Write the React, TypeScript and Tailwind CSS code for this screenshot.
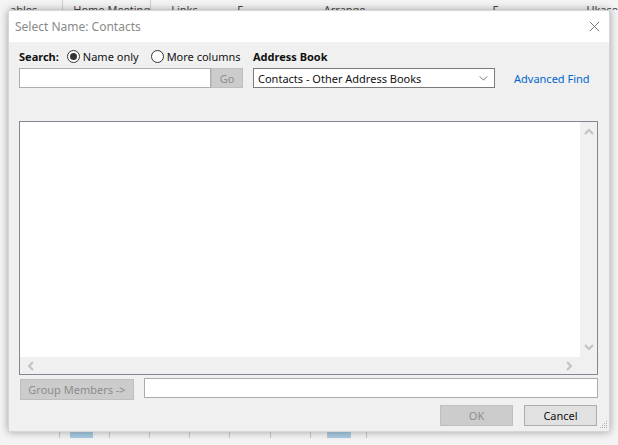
import { useState } from "react";

const font = { fontFamily: '"Noto Sans", "Open Sans", Arial, sans-serif' };

const Radio = ({ checked, label, onClick }: { checked: boolean; label: string; onClick: () => void }) => (
  <button type="button" onClick={onClick} className="flex items-center gap-[3px] text-[11px] leading-none whitespace-nowrap text-[#111]">
    <span className="w-[13px] h-[13px] rounded-full border border-[#333] bg-white flex items-center justify-center">
      {checked && <span className="w-[7px] h-[7px] rounded-full bg-[#333]" />}
    </span>
    {label}
  </button>
);

const Chevron = ({ dir, className }: { dir: "up" | "down" | "left" | "right"; className?: string }) => {
  const d = {
    up: "M1 6 L5 2 L9 6",
    down: "M1 2 L5 6 L9 2",
    left: "M6 1 L2 5 L6 9",
    right: "M2 1 L6 5 L2 9",
  }[dir];
  const vb = dir === "up" || dir === "down" ? "0 0 10 8" : "0 0 8 10";
  const size = dir === "up" || dir === "down" ? "w-[10px] h-[8px]" : "w-[8px] h-[10px]";
  return (
    <svg viewBox={vb} className={`${size} ${className ?? ""}`}>
      <path d={d} fill="none" stroke="#c2c2c2" strokeWidth="2" />
    </svg>
  );
};

const App = () => {
  const [mode, setMode] = useState<"name" | "more">("name");

  return (
    <div className="relative w-[618px] h-[445px] overflow-hidden bg-[#f4f4f4]" style={font}>
      {/* background window strips */}
      <div className="flex h-[10px] text-[11px] text-[#444] leading-none items-start overflow-hidden whitespace-nowrap">
        <span className="pl-[10px] w-[67px] h-[10px] border-r border-[#d0d0d0] pt-[4px]">ables</span>
        <span className="pl-[10px] w-[88px] h-[10px] border-r border-[#d0d0d0] pt-[4px]">Home Meeting</span>
        <span className="pl-[20px] w-[80px] pt-[4px]">Links</span>
        <span className="pl-[10px] w-[92px] pt-[4px]">F</span>
        <span className="pl-[10px] w-[180px] pt-[4px]">Arrange</span>
        <span className="pl-[10px] w-[100px] pt-[4px]">F</span>
        <span className="pl-[10px] pt-[4px]">Ukase</span>
      </div>
      <div className="absolute left-0 top-[432px] w-[618px] h-[6px] flex">
        <div className="w-[60px] border-r border-[#c8c8c8]" />
        <div className="w-[10px]" />
        <div className="w-[23px] bg-[#a8cbe4]" />
        <div className="w-[17px] border-r border-[#c8c8c8]" />
        <div className="w-[40px] border-r border-[#c8c8c8]" />
        <div className="w-[40px] border-r border-[#c8c8c8]" />
        <div className="w-[40px] border-r border-[#c8c8c8]" />
        <div className="w-[41px] border-r border-[#c8c8c8]" />
        <div className="w-[40px] border-r border-[#c8c8c8]" />
        <div className="w-[17px] border-r border-[#c8c8c8]" />
        <div className="w-[23px] bg-[#a8cbe4]" />
        <div className="w-[16px] border-r border-[#c8c8c8]" />
      </div>

      {/* dialog */}
      <div className="absolute left-[8px] top-[10px] w-[602px] h-[422px] bg-[#f0f0f0] flex flex-col shadow-[0_0_8px_rgba(0,0,0,0.35)] border border-[#d6d6d6]">
        <div className="h-[31px] bg-white flex items-center justify-between pl-[6px] pr-[9px] shrink-0">
          <span className="text-[12px] leading-none text-[#8a8a8a]">Select Name: Contacts</span>
          <svg viewBox="0 0 12 12" className="w-[11px] h-[11px]">
            <path d="M1 1 L11 11 M11 1 L1 11" stroke="#6d6d6d" strokeWidth="1" fill="none" />
          </svg>
        </div>

        <div className="flex flex-col px-[10px] flex-1">
          <div className="flex items-center mt-[6px] h-[16px]">
            <div className="flex items-center w-[234px]">
              <span className="text-[11px] leading-none font-bold text-[#111] mr-[8px]">Search:</span>
              <Radio checked={mode === "name"} label="Name only" onClick={() => setMode("name")} />
              <span className="w-[12px]" />
              <Radio checked={mode === "more"} label="More columns" onClick={() => setMode("more")} />
            </div>
            <span className="text-[11px] leading-none font-bold text-[#111]">Address Book</span>
          </div>

          <div className="flex items-center mt-[4px] h-[20px] text-[11px] leading-none">
            <input className="w-[192px] h-[20px] bg-white border border-[#adadad] outline-none px-[3px]" />
            <button type="button" className="w-[32px] h-[20px] bg-[#cccccc] border border-[#bfbfbf] text-[#8d8d8d]">
              Go
            </button>
            <div className="ml-[10px] w-[242px] h-[20px] bg-white border border-[#7a7a7a] flex items-center justify-between pl-[4px] pr-[6px]">
              <span className="text-[#111] whitespace-nowrap">Contacts - Other Address Books</span>
              <svg viewBox="0 0 10 6" className="w-[9px] h-[5px]">
                <path d="M0.5 0.5 L5 5 L9.5 0.5" stroke="#555" strokeWidth="1" fill="none" />
              </svg>
            </div>
            <span className="ml-[19px] text-[#0066cc] whitespace-nowrap">Advanced Find</span>
          </div>

          <div className="mt-[33px] w-[579px] h-[254px] border border-[#828790] bg-[#f0f0f0] flex flex-col">
            <div className="flex flex-1">
              <div className="flex-1 bg-white" />
              <div className="w-[17px] flex flex-col items-center justify-between py-[6px]">
                <Chevron dir="up" />
                <Chevron dir="down" />
              </div>
            </div>
            <div className="h-[17px] flex items-center justify-between pl-[7px] pr-[24px]">
              <Chevron dir="left" />
              <Chevron dir="right" />
            </div>
          </div>

          <div className="flex items-start mt-[3px] h-[21px] text-[11px] leading-none">
            <button type="button" className="ml-[1px] mt-[1px] w-[114px] h-[21px] bg-[#cccccc] border border-[#bfbfbf] text-[#8d8d8d] whitespace-nowrap">
              Group Members -&gt;
            </button>
            <input className="ml-[10px] w-[454px] h-[20px] bg-white border border-[#adadad] outline-none px-[3px]" />
          </div>

          <div className="flex justify-end mt-[6px] pr-[2px] gap-[11px] text-[11px] leading-none">
            <button type="button" className="w-[73px] h-[21px] bg-[#cccccc] border border-[#bfbfbf] text-[#8d8d8d]">
              OK
            </button>
            <button type="button" className="w-[73px] h-[21px] bg-[#e1e1e1] border border-[#adadad] text-[#111]">
              Cancel
            </button>
          </div>
        </div>

        <svg viewBox="0 0 8 8" className="absolute right-[1px] bottom-[2px] w-[8px] h-[8px]">
          <g fill="#b0b0b0">
            <rect x="6" y="0" width="1" height="1" />
            <rect x="4" y="2" width="1" height="1" />
            <rect x="6" y="2" width="1" height="1" />
            <rect x="2" y="4" width="1" height="1" />
            <rect x="4" y="4" width="1" height="1" />
            <rect x="6" y="4" width="1" height="1" />
            <rect x="0" y="6" width="1" height="1" />
            <rect x="2" y="6" width="1" height="1" />
            <rect x="4" y="6" width="1" height="1" />
            <rect x="6" y="6" width="1" height="1" />
          </g>
        </svg>
      </div>
    </div>
  );
};

export default App;
